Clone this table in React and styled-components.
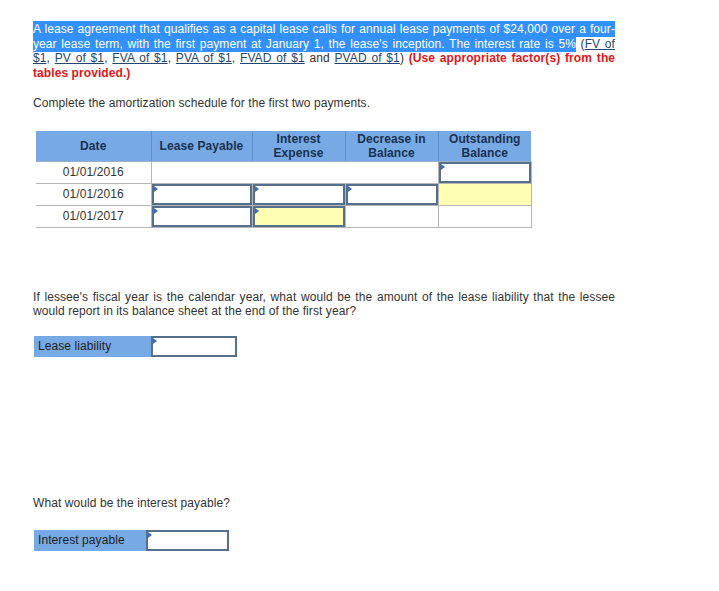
import styled, { createGlobalStyle } from "styled-components";

const GlobalStyle = createGlobalStyle`
  body {
    margin: 0;
    background: #ffffff;
    font-family: "Liberation Sans", Arial, sans-serif;
    font-size: 12px;
    letter-spacing: 0.08px;
    color: #333333;
  }
`;

const Page = styled.div`
  padding: 22px 0 40px 33px;
  width: 582px;
`;

const Para = styled.div`
  margin: 0 0 ${p => p.$gap || 0}px;
  line-height: 14.7px;
`;

// one visual line of a wrapped paragraph, stretched like the justified original
const Line = styled.div`
  text-align: ${p => (p.$last ? "left" : "justify")};
  text-align-last: ${p => (p.$last ? "left" : "justify")};
  white-space: nowrap;
`;

const Selected = styled.span`
  background: #3390ff;
  color: #ffffff;
  padding: 1px 0;
`;

const Ref = styled.a`
  color: #24466e;
  text-decoration: underline;
`;

const Hint = styled.span`
  color: #e0151b;
  font-weight: 700;
`;

const Schedule = styled.table`
  border-collapse: collapse;
  margin: 0 0 62px 3px;
  table-layout: fixed;
  width: 495px;

  col:nth-child(1) { width: 115px; }
  col:nth-child(2) { width: 101px; }
  col:nth-child(3) { width: 93px; }
  col:nth-child(4) { width: 93px; }
  col:nth-child(5) { width: 93px; }
`;

const Head = styled.th`
  background: #77aae4;
  color: #1a3150;
  font-weight: 700;
  font-size: 12px;
  line-height: 14px;
  height: 30px;
  padding: 0;
  text-align: center;
  border-left: 1px solid #5f8fc6;
  border-bottom: 1px solid #9ab0c8;

  &:first-child {
    border-left: none;
  }
`;

const DateCell = styled.td`
  height: 21px;
  padding: 0;
  text-align: center;
  color: #333333;
  border-bottom: 1px solid #b5b5b5;
`;

const Cell = styled.td`
  height: 21px;
  padding: 0;
  background: ${p => (p.$yellow ? "#ffffb3" : "#ffffff")};
  border: 1px solid #b5b5b5;
  border-top: none;
`;

const Field = styled.div`
  position: relative;
  height: 21px;
  box-sizing: border-box;
  border: 2px solid #566f8c;
  background: ${p => (p.$yellow ? "#ffffb3" : "#ffffff")};

  &::before {
    content: "";
    position: absolute;
    top: 0;
    left: 0;
    border-style: solid;
    border-width: 3px 0 3px 4px;
    border-color: transparent transparent transparent #3a6db4;
  }
`;

const AnswerRow = styled.div`
  display: flex;
  margin: 0 0 ${p => p.$gap || 0}px 1px;
  height: 21px;
`;

const AnswerLabel = styled.div`
  width: ${p => p.$w}px;
  background: #77aae4;
  color: #222222;
  padding: 3px 0 0 4px;
  box-sizing: border-box;
  line-height: 14px;
`;

const AnswerField = styled(Field)`
  width: ${p => p.$w}px;
`;

const App = () => {
  return (
    <>
      <GlobalStyle />
      <Page>
        <Para $gap={15}>
          <Line>
            <Selected>
              A lease agreement that qualifies as a capital lease calls for annual
              lease payments of $24,000 over a four-
            </Selected>
          </Line>
          <Line>
            <Selected>
              year lease term, with the first payment at January 1, the lease's
              inception. The interest rate is 5%
            </Selected>{" "}
            (<Ref>FV of</Ref>
          </Line>
          <Line>
            <Ref>$1</Ref>, <Ref>PV of $1</Ref>, <Ref>FVA of $1</Ref>,{" "}
            <Ref>PVA of $1</Ref>, <Ref>FVAD of $1</Ref> and <Ref>PVAD of $1</Ref>){" "}
            <Hint>(Use appropriate factor(s) from the</Hint>
          </Line>
          <Line $last>
            <Hint>tables provided.)</Hint>
          </Line>
        </Para>

        <Para $gap={20}>Complete the amortization schedule for the first two payments.</Para>

        <Schedule>
          <colgroup>
            <col />
            <col />
            <col />
            <col />
            <col />
          </colgroup>
          <thead>
            <tr>
              <Head>Date</Head>
              <Head>Lease Payable</Head>
              <Head>Interest<br />Expense</Head>
              <Head>Decrease in<br />Balance</Head>
              <Head>Outstanding<br />Balance</Head>
            </tr>
          </thead>
          <tbody>
            <tr>
              <DateCell>01/01/2016</DateCell>
              <Cell colSpan={3} />
              <Cell><Field /></Cell>
            </tr>
            <tr>
              <DateCell>01/01/2016</DateCell>
              <Cell><Field /></Cell>
              <Cell><Field /></Cell>
              <Cell><Field /></Cell>
              <Cell $yellow />
            </tr>
            <tr>
              <DateCell>01/01/2017</DateCell>
              <Cell><Field /></Cell>
              <Cell><Field $yellow /></Cell>
              <Cell />
              <Cell />
            </tr>
          </tbody>
        </Schedule>

        <Para $gap={17}>
          <Line>
            If lessee's fiscal year is the calendar year, what would be the amount of
            the lease liability that the lessee
          </Line>
          <Line $last>would report in its balance sheet at the end of the first year?</Line>
        </Para>

        <AnswerRow $gap={139}>
          <AnswerLabel $w={117}>Lease liability</AnswerLabel>
          <AnswerField $w={86} />
        </AnswerRow>

        <Para $gap={19}>What would be the interest payable?</Para>

        <AnswerRow>
          <AnswerLabel $w={112}>Interest payable</AnswerLabel>
          <AnswerField $w={83} />
        </AnswerRow>
      </Page>
    </>
  );
};

export default App;
